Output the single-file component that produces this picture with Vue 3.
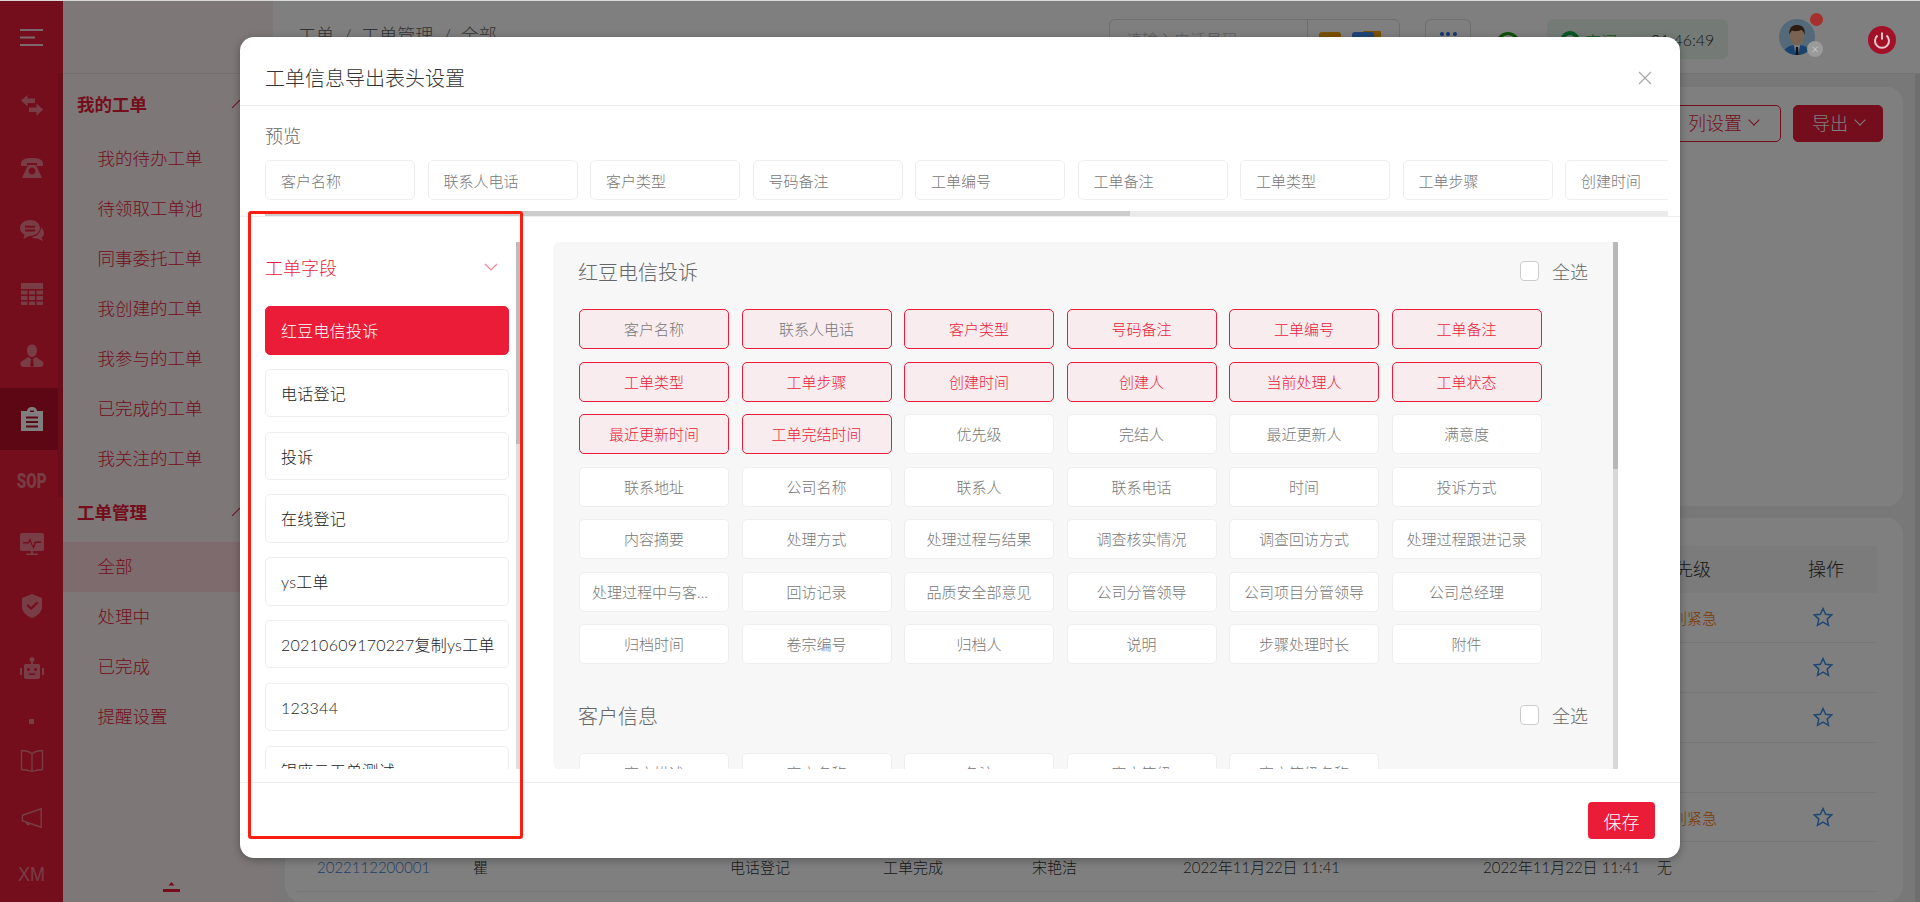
<script setup>
const railIcons = [
  { id: 'swap', fill: 'M1 6.5 7.5 1v3.5H15V9H7.5v3.5Z M23 15.5 16.5 22v-4H9v-4.5h7.5V9.5Z' },
  { id: 'phone', fill: 'M1 7C1 2 6 1 12 1s11 1 11 6v2h-6V6H7v3H1Z M8 8h8l6 13H2Z M12 10.5a3.5 3.5 0 1 0 .01 0Z' },
  { id: 'chat', fill: 'M10 1C4.5 1 0 4.5 0 9c0 3 2 5.5 4.5 6.8L3.500 20 9 17c6 .3 11-3.500 11-8S15.500 1 10 1Z M5 6.800h10v2H5Z M5 10.500h10v2H5Z M21 8.500c2 1.500 3 3.500 3 5.500s-1 3.500-2.500 4.500L23 22l-5.500-2.500c-2.500 0-4.500-.5-6-1.500 4.500 0 9.500-4 9.500-9.500Z' },
  { id: 'grid', fill: 'M1 1h22v6H1Z M1 8.500h6.500v4H1Z M9 8.500h6v4H9Z M16.500 8.500H23v4h-6.500Z M1 14h6.500v4H1Z M9 14h6v4H9Z M16.500 14H23v4h-6.500Z M1 19.500h6.500V23H1Z M9 19.500h6V23H9Z M16.500 19.500H23V23h-6.500Z' },
  { id: 'person', fill: 'M12 .5C8.500.5 7 3.500 7 6.500s2 6.500 5 6.500 5-3.500 5-6.500S15.500.5 12 .5Z M8 13l-7 5c-1 1-.5 5 2 5h18c2.500 0 3-4 2-5l-7-5-3.200 2L14 21.500 12 23.500 10 21.500 11.200 15Z' },
  { id: 'clipboard', active: true, fill: 'M1 4h6c0-2 2-4 5-4s5 2 5 4h6v20H1Z M10 3.500h4V5h-4Z M6 9.500h12v2H6Z M6 14h12v2H6Z M6 18.500h12v2H6Z' },
  { id: 'sop', text: 'SOP' },
  { id: 'monitor', fill: 'M2 1h20a2 2 0 0 1 2 2v14a2 2 0 0 1-2 2H2a2 2 0 0 1-2-2V3a2 2 0 0 1 2-2Z M3 10h5l2-4 3 8 2-4.500h6V11h-5l-2.500 6L10 9.500 9 11.500H3Z M11 19h2v2.500h5V23H6v-1.500h5Z' },
  { id: 'shield', fill: 'M12 0l10 4v9c0 5-5 9-10 11C7 22 2 18 2 13V4Z M6.500 11.500 8 10l3 3 6-5.500L18.500 9 11 16Z' },
  { id: 'robot', fill: 'M12 0a2.500 2.500 0 0 1 1 4.800V7h5a2 2 0 0 1 2 2v11a2 2 0 0 1-2 2H6a2 2 0 0 1-2-2V9a2 2 0 0 1 2-2h5V4.800A2.500 2.500 0 0 1 12 0Z M8.500 11a1.500 1.500 0 1 0 .01 0Z M15.500 11a1.500 1.500 0 1 0 .01 0Z M9 16.500h6V18H9Z M0 11h2v7H0Z M22 11h2v7h-2Z' },
]

const rows = [
  { level: '特别紧急', star: true },
  { level: '', star: true },
  { level: '', star: true },
  { level: '', star: false },
  { level: '特别紧急', star: true },
]

const myOrders = ['我的待办工单', '待领取工单池', '同事委托工单', '我创建的工单', '我参与的工单', '已完成的工单', '我关注的工单']
const manageOrders = ['全部', '处理中', '已完成', '提醒设置']

const previewFields = ['客户名称', '联系人电话', '客户类型', '号码备注', '工单编号', '工单备注', '工单类型', '工单步骤', '创建时间', '创建人']
const orderTypes = ['红豆电信投诉', '电话登记', '投诉', '在线登记', 'ys工单', '20210609170227复制ys工单', '123344', '银座云工单测试']

const firstFields = [
  '客户名称', '联系人电话', '客户类型', '号码备注', '工单编号', '工单备注',
  '工单类型', '工单步骤', '创建时间', '创建人', '当前处理人', '工单状态',
  '最近更新时间', '工单完结时间', '优先级', '完结人', '最近更新人', '满意度',
  '联系地址', '公司名称', '联系人', '联系电话', '时间', '投诉方式',
  '内容摘要', '处理方式', '处理过程与结果', '调查核实情况', '调查回访方式', '处理过程跟进记录',
  '处理过程中与客户沟通记录', '回访记录', '品质安全部意见', '公司分管领导', '公司项目分管领导', '公司总经理',
  '归档时间', '卷宗编号', '归档人', '说明', '步骤处理时长', '附件',
]
const customerFields = ['客户描述', '客户名称', '备注', '客户等级', '客户等级名称']
</script>

<template>
  <div class="page">
    <div class="top-line"></div>
    <div class="shell">
      <!-- icon rail -->
      <aside class="rail">
        <div class="rail-head">
          <svg class="burger" viewBox="0 0 23 17" width="23" height="17">
            <path d="M0 1h23M0 8.500h15M0 16h23" stroke="currentColor" stroke-width="2" fill="none" />
          </svg>
        </div>
        <div class="rail-bar"></div>
        <div
          v-for="icon in railIcons"
          :key="icon.id"
          class="rail-item"
          :class="{ 'rail-item--active': icon.active }"
        >
          <span v-if="icon.text" class="rail-sop">{{ icon.text }}</span>
          <svg v-else viewBox="0 0 24 24" width="24" height="24">
            <path :d="icon.fill" fill="currentColor" fill-rule="evenodd" />
          </svg>
        </div>
        <div class="rail-dot"><span></span></div>
        <div class="rail-line">
          <svg viewBox="0 0 24 24" width="24" height="25">
            <path d="M12 5C9 3 5 2 1.500 2v19c3.500 0 7.500 1 10.500 2 3-1 7-2 10.500-2V2C19 2 15 3 12 5Zm0 0v18" fill="none" stroke="currentColor" stroke-width="1.300" />
          </svg>
        </div>
        <div class="rail-line">
          <svg viewBox="0 0 24 24" width="22" height="22">
            <path d="M1.500 9 22 2v20L1.500 15ZM6 16.500c-.5 2.500 2.500 3.500 3.500 1.500" fill="none" stroke="currentColor" stroke-width="1.500" />
          </svg>
        </div>
        <div class="rail-line rail-xm">XM</div>
      </aside>

      <!-- sub menu -->
      <nav class="submenu">
        <div class="submenu-head"></div>
        <div class="menu-group">
          <div class="menu-title">我的工单<i class="menu-arrow"></i></div>
          <div v-for="item in myOrders" :key="item" class="menu-item">{{ item }}</div>
        </div>
        <div class="menu-group menu-group--second">
          <div class="menu-title">工单管理<i class="menu-arrow"></i></div>
          <div
            v-for="item in manageOrders"
            :key="item"
            class="menu-item"
            :class="{ 'menu-item--active': item === '全部' }"
          >{{ item }}</div>
        </div>
        <div class="menu-foot">
          <svg viewBox="0 0 17 10" width="17" height="10">
            <path d="M8.500 0 11.500 3.500h-6ZM0 7h17v3H0Z" fill="currentColor" />
          </svg>
        </div>
      </nav>

      <div class="main">
        <header class="topbar">
          <div class="crumbs">工单 &nbsp;/&nbsp; 工单管理 &nbsp;/&nbsp; 全部</div>
          <div class="search">
            <span class="search-input">请输入电话号码</span>
            <span class="search-tools">
              <i class="tool tool--orange"></i>
              <i class="tool tool--blue"></i>
            </span>
          </div>
          <div class="more"><span></span><span></span><span></span></div>
          <svg class="wifi" viewBox="0 0 24 24" width="24" height="24">
            <circle cx="12" cy="12" r="10.500" fill="none" stroke="#1fa00f" stroke-width="3" />
          </svg>
          <div class="status">
            <svg viewBox="0 0 20 20" width="20" height="20">
              <circle cx="10" cy="10" r="8" fill="none" stroke="#12b34a" stroke-width="4" />
            </svg>
            <span class="status-text">空闲</span>
            <span class="status-time">01:46:49</span>
          </div>
          <div class="avatar">
            <svg viewBox="0 0 36 36" width="36" height="36">
              <clipPath id="avatar-clip"><circle cx="18" cy="18" r="18" /></clipPath>
              <g clip-path="url(#avatar-clip)">
                <rect width="36" height="36" fill="#a9d4f2" />
                <path d="M4 36c0-7 6-10 14-10s14 3 14 10Z" fill="#2f86dd" />
                <path d="M15 26h6l-1.500 10h-3Z" fill="#fff" />
                <path d="M17 28h2l.8 8h-3.600Z" fill="#223" />
                <ellipse cx="18" cy="17" rx="7" ry="9.500" fill="#f2c9a5" />
                <path d="M10.500 16C9.500 8 14 6 18 6s9 2 7.500 10c-.5-3-2-4.500-3.500-5-3 1.500-7 1.500-9 .5-1 1-2 2-2.500 4.500Z" fill="#5b3520" />
              </g>
            </svg>
            <span class="avatar-dot"></span>
            <span class="avatar-x">×</span>
          </div>
          <div class="power">
            <svg viewBox="0 0 28 28" width="28" height="28">
              <circle cx="14" cy="14" r="14" fill="#a31129" />
              <path d="M9.500 9.500a7 7 0 1 0 9 0M14 6.500v7" fill="none" stroke="#e8c8cc" stroke-width="2" />
            </svg>
          </div>
        </header>

        <div class="content">
          <section class="card card--filter">
            <button class="btn btn--plain">列设置<i class="btn-arrow"></i></button>
            <button class="btn btn--solid">导出<i class="btn-arrow"></i></button>
          </section>
          <section class="card card--table">
            <div class="t-head">
              <span>工单编号</span><span>客户</span><span>工单类型</span><span>工单步骤</span><span>当前处理人</span><span>创建时间</span><span>更新时间</span><span>优先级</span><span>操作</span>
            </div>
            <div v-for="(row, i) in rows" :key="i" class="t-row">
              <span></span><span></span><span></span><span></span><span></span><span></span><span></span>
              <span class="t-level">{{ row.level }}</span>
              <span>
                <svg v-if="row.star" class="t-star" viewBox="0 0 20 20" width="20" height="20">
                  <path d="M10 1.500 12.600 7.200 18.800 7.900 14.200 12.100 15.500 18.300 10 15.200 4.500 18.300 5.800 12.100 1.200 7.900 7.400 7.200Z" fill="none" stroke="currentColor" stroke-width="1.500" />
                </svg>
              </span>
            </div>
            <div class="t-row">
              <span class="t-link">2022112200001</span><span>瞿</span><span>电话登记</span><span>工单完成</span><span>宋艳洁</span><span>2022年11月22日 11:41</span><span>2022年11月22日 11:41</span><span>无</span><span></span>
            </div>
          </section>
        </div>
      </div>
    </div>

    <!-- export header settings dialog -->
    <div class="mask">
      <div class="dialog">
        <div class="dialog-head">
          <span>工单信息导出表头设置</span>
          <svg viewBox="0 0 14 14" width="14" height="14">
            <path d="M1 1l12 12M13 1 1 13" stroke="#a8a8a8" stroke-width="1.200" fill="none" />
          </svg>
        </div>

        <div class="preview">
          <div class="preview-label">预览</div>
          <div class="preview-chips">
            <div v-for="field in previewFields" :key="field" class="preview-chip">{{ field }}</div>
          </div>
          <div class="preview-scroll"><div class="preview-thumb"></div></div>
        </div>

        <div class="dialog-body">
          <div class="types">
            <div class="types-list">
              <div class="types-title">
                <span>工单字段</span>
                <svg viewBox="0 0 14 8" width="14" height="8">
                  <path d="M1 1l6 6 6-6" stroke="#f7859a" stroke-width="1.200" fill="none" />
                </svg>
              </div>
              <div
                v-for="(type, i) in orderTypes"
                :key="type"
                class="type-item"
                :class="{ 'type-item--active': i === 0 }"
              >{{ type }}</div>
            </div>
            <div class="types-scroll"><div class="types-thumb"></div></div>
          </div>

          <div class="fields">
            <div class="fields-scroll">
              <div class="section-head">
                <span class="section-name">红豆电信投诉</span>
                <label class="check-all"><i class="check-box"></i>全选</label>
              </div>
              <div class="field-grid">
                <div
                  v-for="(field, i) in firstFields"
                  :key="field"
                  class="field"
                  :class="{ 'field--on': i < 14, 'field--red': i > 1 && i < 14 }"
                >{{ field }}</div>
              </div>
              <div class="section-head section-head--next">
                <span class="section-name">客户信息</span>
                <label class="check-all"><i class="check-box"></i>全选</label>
              </div>
              <div class="field-grid">
                <div v-for="field in customerFields" :key="field" class="field">{{ field }}</div>
              </div>
            </div>
            <div class="fields-bar"><div class="fields-thumb"></div></div>
          </div>
        </div>

        <div class="dialog-foot">
          <button class="save">保存</button>
        </div>
      </div>
    </div>

    <!-- red annotation frame drawn on the screenshot -->
    <div class="mark"></div>
  </div>
</template>

<style>
html, body {
  margin: 0;
  overflow: hidden;
}
</style>

<style scoped>
.page {
  position: relative;
  width: 1920px;
  height: 902px;
  overflow: hidden;
  font-family: Lato, "Noto Sans CJK SC", sans-serif;
  font-weight: 300;
  color: #333;
  background: #fff;
}

.top-line {
  height: 1px;
  background: #d9d9d9;
}

.shell {
  display: flex;
  height: 901px;
}

/* ── Rail ─────────────────────────────────────────────── */
.rail {
  position: relative;
  flex: none;
  width: 63px;
  background: #e81c38;
  color: rgba(255, 255, 255, 0.42);
}

.rail-head {
  display: flex;
  align-items: center;
  justify-content: center;
  height: 74px;
  color: #fff;
  opacity: 0.8;
}

.burger {
  margin-top: -2px;
}

.rail-bar {
  position: absolute;
  top: 72px;
  right: 0;
  width: 5px;
  height: 424px;
  background: rgba(0, 0, 0, 0.08);
}

.rail-item {
  display: flex;
  align-items: center;
  justify-content: center;
  width: 58px;
  height: 62.5px;
  margin-right: 5px;
  padding-left: 5px;
  box-sizing: border-box;
}

.rail-item--active {
  background: #bb0f28;
  color: #fff;
}

.rail-sop {
  font-family: Roboto, sans-serif;
  font-size: 21px;
  font-weight: 900;
  transform: scaleX(0.72);
}

.rail-dot {
  display: flex;
  align-items: center;
  justify-content: center;
  height: 22px;
  margin-top: 10px;
}

.rail-dot span {
  width: 5px;
  height: 5px;
  background: currentColor;
}

.rail-line {
  display: flex;
  align-items: center;
  justify-content: center;
  height: 57px;
}

.rail-xm {
  font-family: "Liberation Sans", sans-serif;
  font-size: 20px;
  font-weight: 400;
  transform: scaleX(0.9);
}

/* ── Sub menu ─────────────────────────────────────────── */
.submenu {
  display: flex;
  flex: none;
  flex-direction: column;
  width: 210px;
  background: #fbeeee;
  color: #e81c38;
}

.submenu-head {
  height: 72px;
  border-bottom: 1px solid #eadede;
  margin-bottom: 7.5px;
}

.menu-group--second {
  margin-top: 6px;
}

.menu-title {
  position: relative;
  height: 50px;
  margin-bottom: 2px;
  padding-left: 14px;
  font-size: 17.5px;
  font-weight: 700;
  line-height: 46px;
}

.menu-arrow {
  position: absolute;
  top: 20px;
  right: 28px;
  width: 10px;
  height: 10px;
  border-top: 1px solid #e81c38;
  border-left: 1px solid #e81c38;
  transform: rotate(45deg);
}

.menu-item {
  height: 50px;
  padding-left: 34.500px;
  font-size: 17.5px;
  line-height: 49px;
}

.menu-item--active {
  background: #fcd7da;
}

.menu-foot {
  display: flex;
  justify-content: center;
  margin-top: auto;
  padding-bottom: 10px;
  padding-left: 6px;
}

/* ── Main behind the dialog ───────────────────────────── */
.main {
  display: flex;
  flex: 1;
  flex-direction: column;
  min-width: 0;
}

.topbar {
  display: flex;
  align-items: flex-start;
  flex: none;
  height: 72px;
  background: #fff;
}

.crumbs {
  width: 811px;
  padding: 22px 0 0 25px;
  font-size: 18px;
  line-height: 24px;
  color: #666;
  white-space: nowrap;
}

.search {
  display: flex;
  width: 291px;
  height: 40px;
  margin-top: 18px;
  box-sizing: border-box;
  border: 1px solid #ddd;
  border-radius: 6px;
}

.search-input {
  width: 198px;
  padding-left: 16px;
  box-sizing: border-box;
  font-size: 16px;
  line-height: 40px;
  color: #bbb;
  border-right: 1px solid #ddd;
}

.search-tools {
  display: flex;
  gap: 11px;
  padding: 12px 0 0 11px;
}

.tool {
  width: 22px;
  height: 20px;
  border-radius: 3px;
}

.tool--orange {
  background: #f6a200;
}

.tool--blue {
  background: #3f8cf0;
  box-shadow: 9px -3px 0 -2px #f6a200;
}

.more {
  display: flex;
  justify-content: center;
  gap: 2.500px;
  width: 46px;
  height: 40px;
  margin: 18px 0 0 25px;
  padding-top: 12px;
  box-sizing: border-box;
  border: 1px solid #ddd;
  border-radius: 6px;
}

.more span {
  width: 4px;
  height: 4px;
  border-radius: 50%;
  background: #2a6fe0;
}

.wifi {
  margin: 31px 0 0 25px;
}

.status {
  display: flex;
  align-items: center;
  width: 181px;
  height: 40px;
  margin: 18px 0 0 27px;
  padding-left: 13px;
  box-sizing: border-box;
  border-radius: 6px;
  background: #e9f7ec;
}

.status svg {
  margin-top: 4px;
}

.status-text {
  margin: 4px 0 0 5px;
  font-size: 16px;
  color: #12b34a;
}

.status-time {
  margin-left: 34px;
  font-size: 16px;
  color: #333;
}

.avatar {
  width: 36px;
  height: 36px;
  margin: 18px 0 0 51px;
  position: relative;
}

.avatar-dot {
  position: absolute;
  z-index: 12;
  top: -6px;
  right: -8px;
  width: 13px;
  height: 13px;
  border-radius: 50%;
  background: #a5302e;
}

.avatar-x {
  position: absolute;
  z-index: 12;
  top: 22px;
  right: -8px;
  width: 16px;
  height: 16px;
  border-radius: 50%;
  background: #9a9a9a;
  color: #ddd;
  font-size: 13px;
  line-height: 16px;
  text-align: center;
}

.power {
  position: relative;
  z-index: 12;
  margin: 25px 0 0 53px;
  height: 28px;
}

.content {
  position: relative;
  display: flex;
  flex: 1;
  flex-direction: column;
  gap: 12px;
  min-height: 0;
  padding: 13px 17px 0 12px;
  background: #f0f0f0;
  border-top: 1px solid #e8e8e8;
}

.content::after {
  content: "";
  position: absolute;
  top: 0;
  right: 0;
  bottom: 0;
  width: 5px;
  background: #dcdcdc;
}

.card {
  border-radius: 16px;
  background: #fff;
}

.card--filter {
  display: flex;
  justify-content: flex-end;
  gap: 12px;
  height: 419px;
  padding: 18px 20px 0 0;
  box-sizing: border-box;
}

.btn {
  display: flex;
  align-items: center;
  justify-content: center;
  gap: 8px;
  height: 37px;
  padding: 0 0 3px;
  border: 1px solid #e81c38;
  border-radius: 5px;
  font: inherit;
  font-size: 18px;
}

.btn--plain {
  width: 116px;
  background: #fff;
  color: #e81c38;
}

.btn--solid {
  width: 90px;
  background: #e81c38;
  color: #fff;
}

.btn-arrow {
  width: 7px;
  height: 7px;
  margin-top: -5px;
  border-right: 1px solid currentColor;
  border-bottom: 1px solid currentColor;
  transform: rotate(45deg);
}

.card--table {
  flex: 1;
  padding: 28px 26px 0 12px;
}

.t-head,
.t-row {
  display: grid;
  grid-template-columns: 156px 257px 153px 149px 151px 300px 174px 151px 1fr;
  align-items: center;
  padding-left: 20px;
  white-space: nowrap;
}

.t-head {
  height: 47px;
  padding-bottom: 4px;
  box-sizing: border-box;
  background: #f7f7f7;
  font-size: 18px;
}

.t-row {
  height: 49.900px;
  border-bottom: 1px solid #eee;
  box-sizing: border-box;
  font-size: 15px;
}

.t-level {
  color: #ff6a00;
}

.t-star {
  display: block;
  margin-left: 5px;
  color: #3d8ee8;
}

.t-link {
  color: #3d7cd0;
}

/* ── Dialog ───────────────────────────────────────────── */
.mask {
  position: absolute;
  z-index: 10;
  inset: 1px 0 0;
  display: flex;
  justify-content: center;
  background: rgba(0, 0, 0, 0.5);
}

.dialog {
  display: flex;
  flex-direction: column;
  width: 1440px;
  height: 821px;
  margin-top: 36px;
  border-radius: 14px;
  background: #fff;
  box-shadow: 0 2px 8px rgba(0, 0, 0, 0.3);
}

.dialog-head {
  display: flex;
  align-items: center;
  justify-content: space-between;
  flex: none;
  height: 69px;
  padding: 13px 28px 0 25px;
  box-sizing: border-box;
  border-bottom: 1px solid #eee;
  font-size: 20px;
  color: #333;
}

.preview {
  flex: none;
  height: 111px;
  padding: 18px 12px 0 25px;
  box-sizing: border-box;
  border-bottom: 1px solid #eee;
}

.preview-label {
  height: 24px;
  font-size: 18px;
  line-height: 24px;
  color: #666;
}

.preview-chips {
  display: flex;
  gap: 12.5px;
  margin-top: 12px;
  overflow: hidden;
}

.preview-chip {
  flex: none;
  width: 150px;
  height: 40px;
  padding-left: 15px;
  box-sizing: border-box;
  border: 1px solid #eee;
  border-radius: 5px;
  font-size: 15px;
  line-height: 41px;
  color: #777;
}

.preview-scroll {
  height: 5px;
  margin-top: 11px;
  background: #ebebeb;
}

.preview-thumb {
  width: 865px;
  height: 100%;
  background: #cdcdcd;
}

.dialog-body {
  display: flex;
  flex: 1;
  gap: 33px;
  min-height: 0;
  padding: 25px 62px 13px 25px;
}

.types {
  display: flex;
  flex: none;
  gap: 7px;
  width: 255px;
}

.types-list {
  width: 244px;
  overflow: hidden;
}

.types-title {
  display: flex;
  align-items: center;
  justify-content: space-between;
  height: 50px;
  margin-bottom: 14px;
  padding-right: 11px;
  font-size: 18px;
  color: #ea1c38;
}

.type-item {
  height: 48.5px;
  margin-bottom: 14.3px;
  padding-left: 15px;
  box-sizing: border-box;
  border: 1px solid #eee;
  border-radius: 5px;
  font-size: 16px;
  letter-spacing: 0.25px;
  line-height: 48px;
  color: #222;
  white-space: nowrap;
}

.type-item--active {
  border-color: #ea1c38;
  background: #ea1c38;
  color: #fff;
}

.types-scroll {
  width: 4px;
  background: #dedede;
}

.types-thumb {
  height: 202px;
  background: #bdbdbd;
}

.fields {
  display: flex;
  flex: 1;
  min-width: 0;
}

.fields-scroll {
  flex: 1;
  padding-left: 26px;
  overflow: hidden;
  border-radius: 6px 0 0 6px;
  background: #f7f7f7;
}

.section-head {
  display: flex;
  align-items: center;
  justify-content: space-between;
  height: 58px;
  margin: 0 25px 9px -1px;
}

.section-head--next {
  margin-top: 22px;
}

.section-name {
  font-size: 20px;
  color: #666;
}

.check-all {
  display: flex;
  align-items: center;
  gap: 13px;
  font-size: 18px;
  color: #666;
}

.check-box {
  width: 19px;
  height: 20px;
  box-sizing: border-box;
  border: 1px solid #ccc;
  border-radius: 4px;
  background: #fff;
}

.field-grid {
  display: grid;
  grid-template-columns: repeat(6, 150px);
  gap: 12.5px;
}

.field {
  height: 40px;
  padding: 0 12px;
  box-sizing: border-box;
  overflow: hidden;
  border: 1px solid #eee;
  border-radius: 5px;
  background: #fff;
  font-size: 15px;
  line-height: 39px;
  color: #777;
  text-align: center;
  text-overflow: ellipsis;
  white-space: nowrap;
}

.field--on {
  border-color: #ea1c38;
  background: #f8ecee;
}

.field--red {
  color: #ea1c38;
}

.fields-bar {
  flex: none;
  width: 5px;
  background: #d8d8d8;
}

.fields-thumb {
  height: 227px;
  background: #b8b8b8;
}

.dialog-foot {
  display: flex;
  justify-content: flex-end;
  flex: none;
  height: 76px;
  padding: 19px 25px 0 0;
  box-sizing: border-box;
  border-top: 1px solid #eee;
}

.save {
  width: 67px;
  height: 37px;
  padding: 0;
  border: 0;
  border-radius: 4px;
  background: #ea1c38;
  color: #fff;
  font: inherit;
  font-size: 18px;
}

/* ── Annotation ───────────────────────────────────────── */
.mark {
  position: absolute;
  z-index: 20;
  top: 211px;
  left: 248px;
  width: 275px;
  height: 628px;
  box-sizing: border-box;
  border: 3px solid #fb1f12;
  border-radius: 3px;
}
</style>
